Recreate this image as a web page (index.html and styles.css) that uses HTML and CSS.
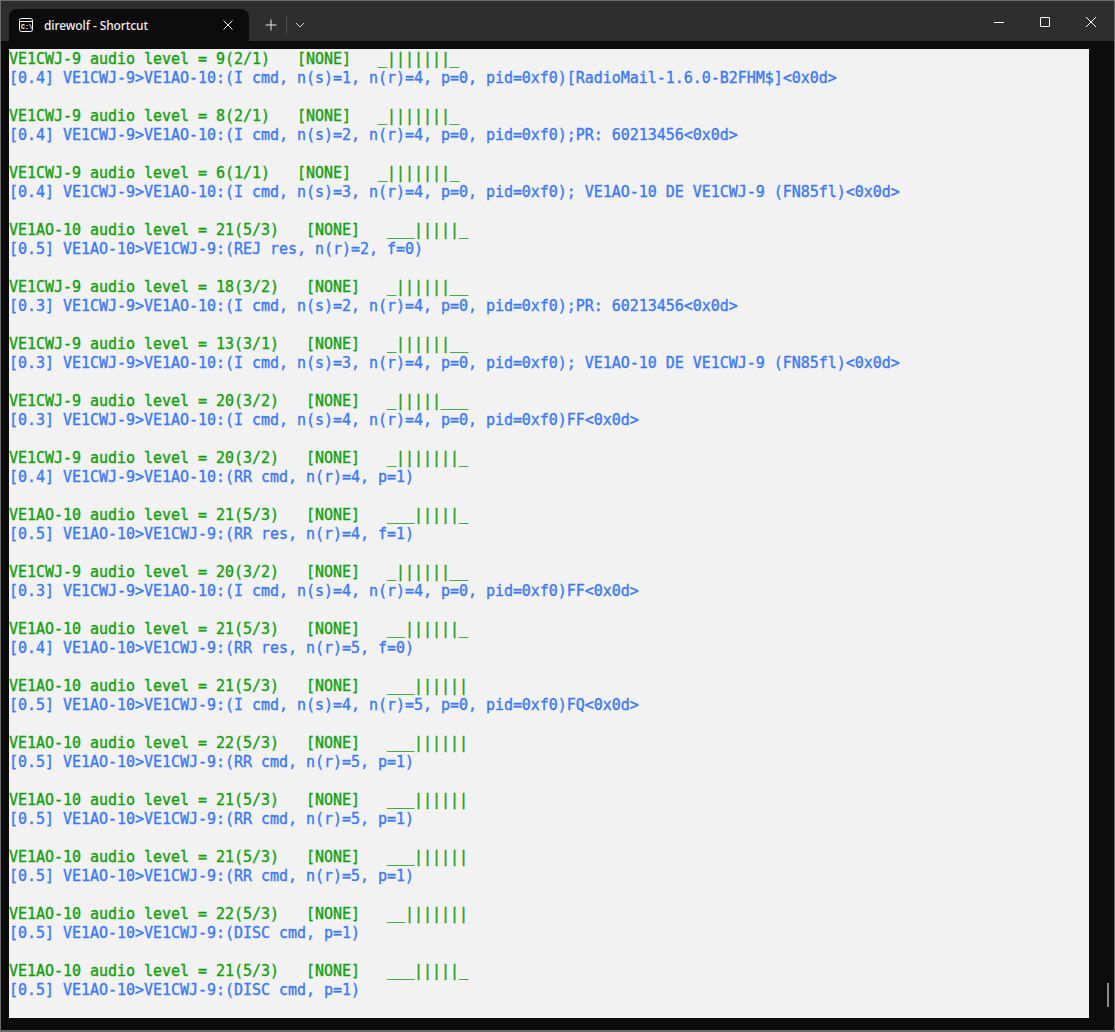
FILE: index.html
```html
<!DOCTYPE html>
<html lang="en">
<head>
    <meta charset="UTF-8">
    <title>direwolf - Shortcut</title>
    <link rel="stylesheet" href="styles.css">
</head>
<body>
    <div class="window">
        <div class="titlebar">
            <div class="tab">
                <svg class="tab-icon" width="16" height="16" viewBox="0 0 16 16" fill="none" stroke="#fff" stroke-width="1">
                    <rect x="0.5" y="1.5" width="13" height="13" rx="2"/>
                    <path d="M0.5 4.5h13"/>
                    <text x="2" y="11.5" font-size="6.5" font-weight="700" font-family="Liberation Mono, monospace" fill="#fff" stroke="none">C:\</text>
                </svg>
                <span class="tab-title">direwolf - Shortcut</span>
                <svg class="tab-close" width="10" height="10" viewBox="0 0 10 10" stroke="#e8e8e8" stroke-width="1">
                    <path d="M0.5 0.5l9 9M9.5 0.5l-9 9"/>
                </svg>
            </div>
            <div class="new-tab">
                <svg width="12" height="12" viewBox="0 0 12 12" stroke="#e8e8e8" stroke-width="1">
                    <path d="M6 0.5v11M0.5 6h11"/>
                </svg>
            </div>
            <div class="divider"></div>
            <div class="tab-menu">
                <svg width="10" height="6" viewBox="0 0 10 6" fill="none" stroke="#d8d8d8" stroke-width="1">
                    <path d="M1 1l4 4 4-4"/>
                </svg>
            </div>
            <div class="caption">
                <button class="caption-btn">
                    <svg width="10" height="10" viewBox="0 0 10 10" stroke="#fff" stroke-width="1"><path d="M0 5.5h10"/></svg>
                </button>
                <button class="caption-btn">
                    <svg width="10" height="10" viewBox="0 0 10 10" fill="none" stroke="#fff" stroke-width="1"><rect x="0.5" y="0.5" width="9" height="9" rx="0.5"/></svg>
                </button>
                <button class="caption-btn">
                    <svg width="10" height="10" viewBox="0 0 10 10" stroke="#fff" stroke-width="1"><path d="M0 0l10 10M10 0l-10 10"/></svg>
                </button>
            </div>
        </div>
        <div class="terminal-area">
            <pre class="terminal"><span class="level">VE1CWJ-9 audio level = 9(2/1)   [NONE]   _|||||||_</span>
<span class="frame">[0.4] VE1CWJ-9&gt;VE1AO-10:(I cmd, n(s)=1, n(r)=4, p=0, pid=0xf0)[RadioMail-1.6.0-B2FHM$]&lt;0x0d&gt;</span>

<span class="level">VE1CWJ-9 audio level = 8(2/1)   [NONE]   _|||||||_</span>
<span class="frame">[0.4] VE1CWJ-9&gt;VE1AO-10:(I cmd, n(s)=2, n(r)=4, p=0, pid=0xf0);PR: 60213456&lt;0x0d&gt;</span>

<span class="level">VE1CWJ-9 audio level = 6(1/1)   [NONE]   _|||||||_</span>
<span class="frame">[0.4] VE1CWJ-9&gt;VE1AO-10:(I cmd, n(s)=3, n(r)=4, p=0, pid=0xf0); VE1AO-10 DE VE1CWJ-9 (FN85fl)&lt;0x0d&gt;</span>

<span class="level">VE1AO-10 audio level = 21(5/3)   [NONE]   ___|||||_</span>
<span class="frame">[0.5] VE1AO-10&gt;VE1CWJ-9:(REJ res, n(r)=2, f=0)</span>

<span class="level">VE1CWJ-9 audio level = 18(3/2)   [NONE]   _||||||__</span>
<span class="frame">[0.3] VE1CWJ-9&gt;VE1AO-10:(I cmd, n(s)=2, n(r)=4, p=0, pid=0xf0);PR: 60213456&lt;0x0d&gt;</span>

<span class="level">VE1CWJ-9 audio level = 13(3/1)   [NONE]   _||||||__</span>
<span class="frame">[0.3] VE1CWJ-9&gt;VE1AO-10:(I cmd, n(s)=3, n(r)=4, p=0, pid=0xf0); VE1AO-10 DE VE1CWJ-9 (FN85fl)&lt;0x0d&gt;</span>

<span class="level">VE1CWJ-9 audio level = 20(3/2)   [NONE]   _|||||___</span>
<span class="frame">[0.3] VE1CWJ-9&gt;VE1AO-10:(I cmd, n(s)=4, n(r)=4, p=0, pid=0xf0)FF&lt;0x0d&gt;</span>

<span class="level">VE1CWJ-9 audio level = 20(3/2)   [NONE]   _|||||||_</span>
<span class="frame">[0.4] VE1CWJ-9&gt;VE1AO-10:(RR cmd, n(r)=4, p=1)</span>

<span class="level">VE1AO-10 audio level = 21(5/3)   [NONE]   ___|||||_</span>
<span class="frame">[0.5] VE1AO-10&gt;VE1CWJ-9:(RR res, n(r)=4, f=1)</span>

<span class="level">VE1CWJ-9 audio level = 20(3/2)   [NONE]   _||||||__</span>
<span class="frame">[0.3] VE1CWJ-9&gt;VE1AO-10:(I cmd, n(s)=4, n(r)=4, p=0, pid=0xf0)FF&lt;0x0d&gt;</span>

<span class="level">VE1AO-10 audio level = 21(5/3)   [NONE]   __||||||_</span>
<span class="frame">[0.4] VE1AO-10&gt;VE1CWJ-9:(RR res, n(r)=5, f=0)</span>

<span class="level">VE1AO-10 audio level = 21(5/3)   [NONE]   ___||||||</span>
<span class="frame">[0.5] VE1AO-10&gt;VE1CWJ-9:(I cmd, n(s)=4, n(r)=5, p=0, pid=0xf0)FQ&lt;0x0d&gt;</span>

<span class="level">VE1AO-10 audio level = 22(5/3)   [NONE]   ___||||||</span>
<span class="frame">[0.5] VE1AO-10&gt;VE1CWJ-9:(RR cmd, n(r)=5, p=1)</span>

<span class="level">VE1AO-10 audio level = 21(5/3)   [NONE]   ___||||||</span>
<span class="frame">[0.5] VE1AO-10&gt;VE1CWJ-9:(RR cmd, n(r)=5, p=1)</span>

<span class="level">VE1AO-10 audio level = 21(5/3)   [NONE]   ___||||||</span>
<span class="frame">[0.5] VE1AO-10&gt;VE1CWJ-9:(RR cmd, n(r)=5, p=1)</span>

<span class="level">VE1AO-10 audio level = 22(5/3)   [NONE]   __|||||||</span>
<span class="frame">[0.5] VE1AO-10&gt;VE1CWJ-9:(DISC cmd, p=1)</span>

<span class="level">VE1AO-10 audio level = 21(5/3)   [NONE]   ___|||||_</span>
<span class="frame">[0.5] VE1AO-10&gt;VE1CWJ-9:(DISC cmd, p=1)</span></pre>
            <div class="scrollbar"></div>
        </div>
    </div>
</body>
</html>
```

FILE: styles.css
```css
* {
    margin: 0;
    padding: 0;
    box-sizing: border-box;
}

html, body {
    height: 100%;
}

body {
    background: #0c0c0c;
    overflow: hidden;
}

.window {
    display: flex;
    flex-direction: column;
    height: 1032px;
    border: 1px solid #6c6c6c;
    border-bottom-width: 2px;
    background: #0c0c0c;
}

.titlebar {
    display: flex;
    align-items: flex-end;
    height: 40px;
    flex: none;
    padding-left: 8px;
    background: #2e2e2e;
}

.tab {
    display: flex;
    align-items: center;
    width: 240px;
    height: 32px;
    padding: 0 10px;
    background: #0c0c0c;
    border-radius: 8px 8px 0 0;
}

.tab-icon {
    flex: none;
    margin-right: 9px;
}

.tab-title {
    flex: 1;
    color: #f0f0f0;
    font-family: "Noto Sans", "Open Sans", sans-serif;
    font-size: 12px;
    font-weight: 500;
    letter-spacing: -0.1px;
}

.tab-close {
    flex: none;
    margin-right: 6px;
}

.new-tab {
    display: flex;
    align-items: center;
    justify-content: center;
    width: 36px;
    height: 32px;
    margin-left: 1px;
    padding-left: 6px;
}

.divider {
    width: 1px;
    height: 20px;
    margin-bottom: 6px;
    background: #4a4a4a;
}

.tab-menu {
    display: flex;
    align-items: center;
    justify-content: center;
    width: 26px;
    height: 32px;
}

.caption {
    display: flex;
    align-self: stretch;
    margin-left: auto;
}

.caption-btn {
    display: flex;
    align-items: center;
    justify-content: center;
    width: 46px;
    height: 100%;
    padding-top: 1px;
    background: none;
    border: none;
}

.terminal-area {
    position: relative;
    flex: 1;
    padding: 8px 25px 12px 8px;
    background: #0c0c0c;
}

.terminal {
    height: 100%;
    padding-top: 1px;
    background: #f2f2f2;
    font-family: "DejaVu Sans Mono", monospace;
    font-size: 15px;
    line-height: 19px;
    letter-spacing: -0.033px;
    -webkit-text-stroke: 0.35px currentColor;
}

.level {
    color: #13a10e;
}

.frame {
    color: #3b78ff;
}

.scrollbar {
    position: absolute;
    right: 5px;
    bottom: 23px;
    width: 2px;
    height: 24px;
    background: #8a8a8a;
}
```
